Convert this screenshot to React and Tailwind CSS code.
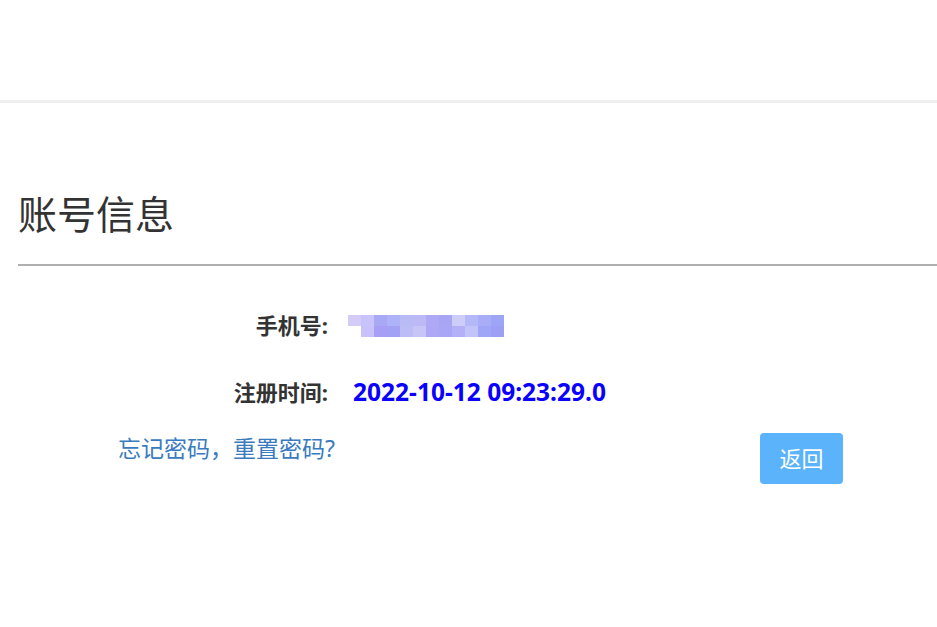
import React from 'react';

const font = { fontFamily: '"Noto Sans", "Noto Sans CJK SC", sans-serif' };

// pixelated mosaic over the phone number
const mosaic = [
  ['#d4ccf7', '#c9c3fb', '#a9a8f5', '#aeb2f8', '#b9bbf7', '#bdb9f6', '#aea8f5', '#a8a6f4', '#cdcdf8', '#b5b8f8', '#a9acf6', '#9ea4f6'],
  ['#ffffff', '#c7c2fa', '#a79ff6', '#a3a1f6', '#bcbdf7', '#c7c5f8', '#aea7f6', '#a9a7f5', '#b3b0f7', '#c2c3f8', '#9fa5f7', '#9d9ff5'],
];

const Mosaic = () => (
  <div className="flex flex-col">
    {mosaic.map((row, i) => (
      <div key={i} className="flex">
        {row.map((c, j) => (
          <div key={j} className="w-[13px] h-[11px]" style={{ background: c }} />
        ))}
      </div>
    ))}
  </div>
);

export default function App() {
  return (
    <div className="w-[937px] h-[627px] bg-white overflow-hidden" style={font}>
      {/* top bar */}
      <div className="h-[103px] border-b-[3px] border-[#efefef]" />

      <div className="pl-[18px]">
        <h2 className="mt-[85px] text-[39px] leading-[52px] text-[#333] font-normal">账号信息</h2>
        <div className="mt-[24px] h-[2px] bg-[#b0b0b0]" />

        <div className="mt-[43px] flex items-center">
          <div className="w-[310px] text-right text-[22px] font-bold text-[#333]">手机号:</div>
          <div className="ml-[20px]">
            <Mosaic />
          </div>
        </div>

        <div className="mt-[32px] flex items-center">
          <div className="w-[310px] text-right text-[22px] font-bold text-[#333]">注册时间:</div>
          <div className="ml-[25px] text-[24.5px] font-bold text-[#0a00ff]">2022-10-12 09:23:29.0</div>
        </div>

        <div className="mt-[18px] flex items-start">
          <a className="ml-[100px] mt-[2px] text-[23px] text-[#3a7bbf]">忘记密码，重置密码?</a>
          <button className="ml-[425px] mt-[4px] w-[83px] h-[51px] rounded-[4px] bg-[#5bb3fc] text-white text-[22px]">返回</button>
        </div>
      </div>
    </div>
  );
}
